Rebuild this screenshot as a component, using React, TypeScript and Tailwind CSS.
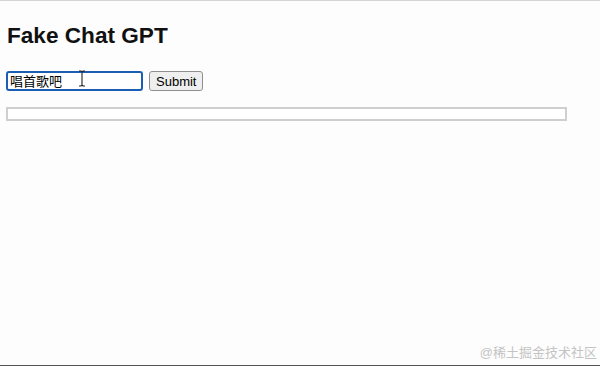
export default function App() {
  return (
    <div className="relative h-[366px] w-[600px] overflow-hidden border-t border-[#d4d4d4] bg-[#fdfdfd] font-['Liberation_Sans','Noto_Sans_CJK_SC',sans-serif] text-black">
      <div className="px-[6px]">
        <h1 className="mt-[22px] ml-px text-[22.6px] leading-[26px] font-bold text-[#111]">Fake Chat GPT</h1>

        <form className="mt-[20px] flex items-center gap-[6px]" onSubmit={(e) => e.preventDefault()}>
          <div className="relative">
            <input
              defaultValue="唱首歌吧"
              className="h-[20px] w-[137px] rounded-[3px] border-2 border-[#1a5fb4] bg-white px-[2px] text-[13px] leading-none outline-none"
            />
            {/* I-beam cursor */}
            <svg className="absolute top-[1px] left-[72px]" width="8" height="17" viewBox="0 0 8 17">
              <path d="M1 1h2l1 1 1-1h2M4 2v13M1 16h2l1-1 1 1h2" stroke="#222" strokeWidth="1.1" fill="none" />
            </svg>
          </div>
          <button
            type="submit"
            className="h-[20px] rounded-[3px] border border-[#8f8f8f] bg-[#efefef] px-[6px] text-[13px] leading-none"
          >
            Submit
          </button>
        </form>

        <div className="mt-[14px] h-[14px] w-[561px] border-2 border-[#cfcfcf] bg-white" />
      </div>

      <div className="absolute right-[3px] bottom-[4px] text-[13px] text-[#c4c4c4]">@稀土掘金技术社区</div>
      <div className="absolute inset-x-0 bottom-0 h-px bg-[#555]" />
    </div>
  );
}
